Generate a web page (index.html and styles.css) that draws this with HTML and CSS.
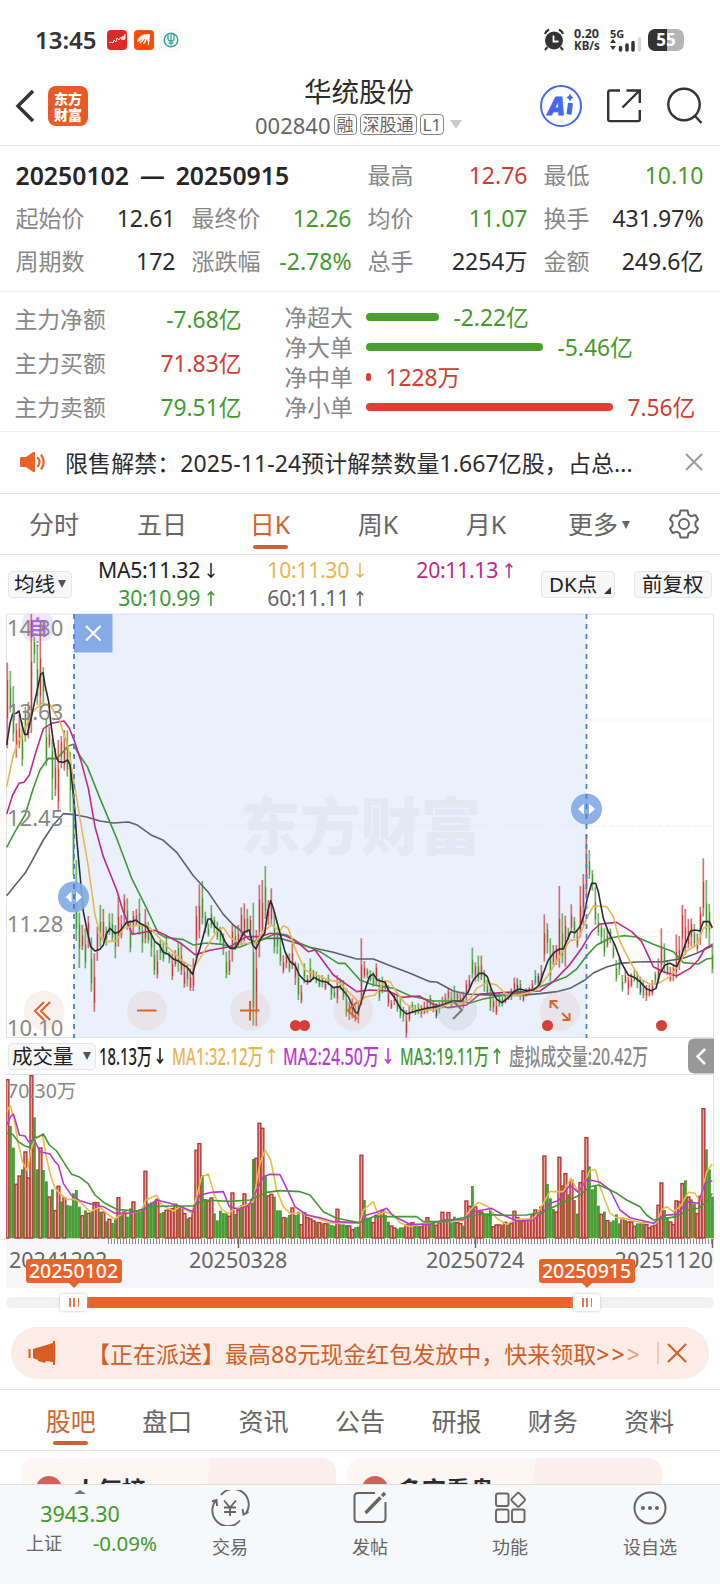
FILE: index.html
```html
<!DOCTYPE html>
<html lang="zh-CN">
<head>
<meta charset="utf-8">
<title>华统股份</title>
<link rel="stylesheet" href="styles.css">
</head>
<body>
<div class="app">
  <div class="status">
    <span class="clock">13:45</span>
    <svg class="apps" width="78" height="22" viewBox="0 0 78 22">
      <rect x="1" y="1" width="20" height="20" rx="4" fill="#e02828"/>
      <path d="M3 14l2-1 2 1 1-3 2 2 1-4 2 2 2-3 1 3 1-4 1 4 1-6v5" fill="none" stroke="#fff" stroke-width=".9"/>
      <rect x="28" y="1" width="20" height="20" rx="4" fill="#ff4a00"/>
      <path d="M31 12q3-8 13-7l-1 11h-1q0-4-1-6-1 3-3 5l-1-.5q2-3 2-5-2 3-5 5l-.7-1q3-2 4-4-3 3-6 3.500z" fill="#fff"/>
      <rect x="55" y="1" width="20" height="20" rx="4" fill="#fff" stroke="#f3f3f3"/>
      <g fill="none" stroke="#3aa59b"><circle cx="65" cy="11" r="6.800" stroke-width="1.500"/><path d="M65 4.500v12M62 5v5q0 2 3 2 3 0 3-2V5M62.500 14h5" stroke-width="1.300"/></g>
    </svg>
    <svg class="alarm" width="22" height="24" viewBox="0 0 22 24">
      <circle cx="11" cy="12.500" r="9" fill="#333"/><path d="M2 6q1-3 4-4.500M20 6q-1-3-4-4.500M4.500 19L2 22M17.500 19l2.500 3" fill="none" stroke="#333" stroke-width="2"/><path d="M10.500 7.500v6h5" fill="none" stroke="#fff" stroke-width="1.800"/>
    </svg>
    <div class="net"><span>0.20</span><span>KB/s</span></div>
    <div class="signal"><span>5G</span>
      <svg width="32" height="15" viewBox="0 0 32 15"><path d="M0 6l3-4 3 4zM0 9l3 4 3-4z" fill="#333"/><path d="M10.500 13v-2.500M17 13V8M23 13V5.500" stroke="#333" stroke-width="3.500" stroke-linecap="round"/><path d="M29.500 13V2" stroke="#d8d8d8" stroke-width="3.500" stroke-linecap="round"/></svg>
    </div>
    <div class="battery"><span>55</span></div>
  </div>

  <header class="head">
    <svg class="back" width="20" height="34" viewBox="0 0 20 34"><path d="M18 2L3 17l15 15" fill="none" stroke="#333" stroke-width="3.500"/></svg>
    <div class="logo">东方<br>财富</div>
    <div class="title">
      <h1>华统股份</h1>
      <div class="code"><span>002840</span><b>融</b><b>深股通</b><b>L1</b><i></i></div>
    </div>
    <svg class="actions" width="164" height="44" viewBox="0 0 164 44">
      <circle cx="22" cy="22" r="20" fill="#fff" stroke="#4468f0" stroke-width="2"/>
      <text x="9" y="30.500" class="ai" textLength="17" lengthAdjust="spacingAndGlyphs">A</text><path d="M31.500 19l-1.500 11.500" stroke="#4468f0" stroke-width="5"/><path d="M31 9.500q.8 3 3.500 4-2.700 1-3.500 4-.8-3-3.500-4 2.700-1 3.500-4z" fill="#4468f0"/>
      <g fill="none" stroke="#333" stroke-width="2.400"><path d="M81 6.500H71q-1.800 0-1.800 1.800v27q0 1.800 1.800 1.800h28q1.800 0 1.800-1.800V26M83.500 23.500l17-17M87.500 6.500h13.300V19"/><circle cx="145" cy="20.500" r="15.700"/><path d="M155.500 31.500l7 7.500"/></g>
    </svg>
  </header>

  <section class="stats">
    <div class="range">20250102 — 20250915</div>
    <p>最高<em class="r">12.76</em></p><p>最低<em class="g">10.10</em></p>
    <p>起始价<em>12.61</em></p><p>最终价<em class="g">12.26</em></p><p>均价<em class="g">11.07</em></p><p>换手<em>431.97%</em></p>
    <p>周期数<em>172</em></p><p>涨跌幅<em class="g">-2.78%</em></p><p>总手<em>2254万</em></p><p>金额<em>249.6亿</em></p>
  </section>

  <section class="flow">
    <div class="main-flow">
      <p>主力净额<em class="g">-7.68亿</em></p><p>主力买额<em class="r">71.83亿</em></p><p>主力卖额<em class="g">79.51亿</em></p>
    </div>
    <div class="net-flow">
      <p>净超大<i class="bar bg" style="width:73px"></i><em class="g">-2.22亿</em></p>
      <p>净大单<i class="bar bg" style="width:177px"></i><em class="g">-5.46亿</em></p>
      <p>净中单<i class="bar br" style="width:5px"></i><em class="r">1228万</em></p>
      <p>净小单<i class="bar br" style="width:247px"></i><em class="r">7.56亿</em></p>
    </div>
  </section>

  <div class="notice">
    <svg width="28" height="22" viewBox="0 0 28 22"><path d="M1 7.500Q1 6 2.500 6H7l6.500-4.500Q16 0 16 2v18q0 2-2.500.5L7 16H2.500Q1 16 1 14.500z" fill="#ea622c"/><path d="M19 7q3 4 0 8M22.500 4.500q4.500 6.500 0 13" fill="none" stroke="#ea622c" stroke-width="2.200" stroke-linecap="round"/></svg>
    <span>限售解禁：2025-11-24预计解禁数量1.667亿股，占总...</span>
    <svg class="x" width="18" height="18" viewBox="0 0 18 18"><path d="M1 1l16 16M17 1L1 17" stroke="#999" stroke-width="1.800"/></svg>
  </div>

  <nav class="periods">
    <span>分时</span><span>五日</span><span class="on">日K</span><span>周K</span><span>月K</span><span class="more">更多<i></i></span>
    <svg width="30" height="30" viewBox="0 0 30 30"><g fill="none" stroke="#666" stroke-width="2" stroke-linejoin="round"><path d="M11.500 1.500h7l1 4.200 2.700 1.600 4.200-1.300 2.600 4.500-2.500 2.700v3.600l2.500 2.700-2.600 4.500-4.200-1.300-2.700 1.600-1 4.200h-7l-1-4.200-2.700-1.600L3.600 24 1 19.500l2.500-2.700v-3.600L1 10.500 3.600 6l4.200 1.300 2.700-1.600z"/><circle cx="15" cy="15" r="5"/></g></svg>
  </nav>

  <div class="ma">
    <span class="pill drop">均线<i></i></span>
    <div class="ma-vals">
      <span class="c5">MA5:11.32<svg><use href="#dn"/></svg></span><span class="c10">10:11.30<svg><use href="#dn"/></svg></span><span class="c20">20:11.13<svg><use href="#up"/></svg></span>
      <span class="c30">30:10.99<svg><use href="#up"/></svg></span><span class="c60">60:11.11<svg><use href="#up"/></svg></span>
    </div>
    <span class="pill dk">DK点<i></i></span><span class="pill fq">前复权</span>
  </div>

  <svg class="kline" width="708" height="426" viewBox="6 613 708 426">
    <defs>
      <symbol id="dn" viewBox="0 0 10 18"><path d="M5 1v15M1.500 12.500L5 16l3.500-3.500" fill="none" stroke="currentColor" stroke-width="1.600"/></symbol>
      <symbol id="up" viewBox="0 0 10 18"><path d="M5 17V2M1.500 5.500L5 2l3.500 3.500" fill="none" stroke="currentColor" stroke-width="1.600"/></symbol>
    </defs>
    <rect x="74" y="614" width="512.500" height="424" fill="#eaf1fc"/>
    <path d="M6.500 614h707v423.500h-707z" fill="none" stroke="#dfe2e8"/>
    <path d="M7 720h706M7 826h706M7 932h706" stroke="#dfe4ec" stroke-opacity=".6" stroke-dasharray="5 2"/>
    <text class="watermark" x="240" y="850" textLength="241" lengthAdjust="spacingAndGlyphs">东方财富</text>
    <rect x="22" y="612" width="31" height="29" rx="9" fill="#f0e6fc"/><text x="28" y="635" class="self">自</text><path d="M37.500 641v6" stroke="#a46af0" stroke-width="1.600" stroke-dasharray="2 1.500"/>
    <g id="candles" transform="translate(0 605) scale(.33333)"></g>
    <g id="averages" class="lines" transform="translate(0 605) scale(.33333)">
      <path stroke="#5e6169" d="M20 872L50 835 75 805 95 770 130 705 160 660 190 626 215 628 260 636 300 648 340 654 385 651 410 659 455 691 490 706 530 742 580 812 625 862 670 928 700 960 720 975 745 1002 765 1012 800 1000 840 1000 880 1012 930 1027 1000 1042 1070 1062 1120 1062 1165 1080 1230 1105 1290 1130 1310 1131 1360 1158 1400 1167 1440 1169 1500 1171 1560 1171 1620 1166 1670 1160 1710 1150 1755 1125 1780 1104 1820 1086 1860 1075 1910 1071 1990 1070 2050 1060 2090 1045 2137 1022"/>
      <path stroke="#3f9a35" d="M20 727L45 680 75 630 100 550 120 495 145 460 170 461 190 440 205 423 220 418 235 445 262 485 300 580 350 700 395 820 440 910 475 985 495 997 550 1004 580 1020 620 1014 665 1018 700 1028 720 1026 760 1010 790 1002 830 985 860 990 900 1015 960 1040 1015 1075 1035 1075 1080 1125 1120 1140 1180 1150 1230 1172 1300 1188 1370 1188 1410 1194 1450 1182 1510 1171 1580 1160 1640 1138 1700 1115 1730 1092 1760 1052 1790 1020 1830 999 1870 992 1910 996 1960 1018 2020 1040 2050 1073 2095 1077 2120 1062 2137 1060"/>
      <path stroke="#c02b87" d="M20 627L38 570 57 535 72 532 88 510 108 440 130 371 155 355 192 348 208 370 224 410 245 475 265 550 285 665 310 755 350 855 370 920 397 988 420 984 465 976 495 990 540 1013 585 1049 630 1036 690 1025 740 995 780 995 812 985 855 992 890 1010 925 1040 945 1035 1000 1110 1070 1160 1110 1155 1165 1158 1205 1177 1258 1173 1300 1198 1345 1208 1400 1200 1440 1167 1520 1162 1575 1160 1620 1158 1660 1130 1710 1078 1745 1030 1775 980 1800 957 1850 952 1895 980 1925 1010 1960 1085 1990 1100 2030 1113 2070 1090 2095 1065 2115 1030 2137 1018"/>
      <path stroke="#e8b653" d="M20 545L40 450 55 410 75 370 100 318 112 307 128 294 150 300 180 350 205 430 225 550 245 670 265 785 285 930 305 1002 325 1010 350 1007 370 970 400 963 430 960 445 963 470 990 505 1028 550 1070 582 1088 600 1060 630 1010 650 980 670 967 690 997 720 1015 765 1015 790 980 815 960 840 978 850 962 865 970 885 1030 915 1095 950 1110 985 1125 1015 1130 1050 1165 1075 1190 1100 1175 1125 1170 1155 1128 1170 1130 1190 1162 1215 1195 1250 1217 1300 1215 1350 1195 1385 1197 1410 1182 1430 1150 1460 1133 1490 1140 1520 1170 1560 1171 1610 1155 1645 1110 1690 1035 1710 1007 1735 1003 1760 940 1780 903 1820 905 1840 935 1860 1010 1890 1070 1920 1120 1950 1138 1975 1135 2010 1115 2035 1080 2060 1038 2090 1020 2110 970 2125 963 2137 970"/>
      <path stroke="#2b2b30" d="M20 420L30 355 38 327 48 325 57 318 66 360 74 388 82 388 92 345 104 290 122 208 129 203 135 240 146 290 152 350 160 410 168 455 176 470 190 472 203 465 210 480 217 540 224 610 230 700 240 810 250 920 262 980 272 1025 285 1038 300 1033 310 1020 320 985 330 970 345 985 358 980 370 965 380 952 395 950 408 945 420 955 440 965 452 985 465 1010 478 1020 490 1042 505 1048 520 1062 535 1068 550 1080 560 1085 578 1108 590 1060 600 1030 612 985 624 942 632 942 645 965 662 980 675 1010 690 1030 705 1030 720 1005 732 982 748 975 758 1020 768 1032 780 1005 794 985 803 920 812 887 820 910 840 985 855 1040 870 1070 885 1080 898 1110 915 1128 930 1130 942 1117 960 1127 982 1132 1000 1148 1020 1145 1045 1175 1065 1220 1073 1225 1090 1170 1108 1115 1120 1107 1132 1125 1155 1132 1165 1155 1185 1180 1202 1212 1220 1227 1250 1217 1280 1210 1310 1205 1340 1195 1360 1188 1385 1188 1405 1160 1420 1125 1438 1105 1450 1105 1462 1115 1475 1155 1490 1183 1506 1193 1525 1178 1545 1157 1560 1152 1580 1157 1600 1155 1618 1140 1630 1105 1645 1065 1662 1043 1678 1032 1690 1032 1702 1005 1712 980 1725 983 1740 965 1752 930 1762 880 1775 835 1787 835 1795 860 1810 940 1825 980 1845 1020 1865 1075 1885 1110 1905 1118 1920 1130 1940 1152 1955 1157 1968 1150 1980 1105 1995 1080 2010 1075 2030 1085 2040 1065 2055 1020 2072 978 2085 975 2100 978 2110 950 2128 950 2137 968"/>
    </g>
    <g class="scale"><text x="7" y="636">14.80</text><text x="7" y="720">13.63</text><text x="7" y="826">12.45</text><text x="7" y="932">11.28</text><text x="7" y="1036">10.10</text></g>
    <g fill="#e2a58c" fill-opacity=".17"><circle cx="44" cy="1010.500" r="20"/><circle cx="147" cy="1010.500" r="20"/><circle cx="250" cy="1010.500" r="20"/><circle cx="353" cy="1010.500" r="20"/><circle cx="457" cy="1010.500" r="20" fill="#a0a5ac"/><circle cx="560" cy="1010.500" r="20"/></g>
    <g fill="none" stroke="#d9652f" stroke-width="2"><path d="M44 1002l-9 9 9 9M50 1002l-9 9 9 9M137 1010.500h19.500M240 1010.500h19.500M250 1001v19.500M357 1002l-9 8.500 9 8.500M550.500 1008v-7h7M551 1001.500l7 7M562 1013l7 7M562.500 1020h7v-7"/><path stroke="#777" d="M453 1001l9 9-9 9"/></g>
    <g fill="#d63f36"><circle cx="295.500" cy="1025.500" r="5.500"/><circle cx="304.500" cy="1025.500" r="5.500"/><circle cx="547.500" cy="1025.500" r="5.500"/><circle cx="661.500" cy="1025.500" r="5.500"/></g>
    <rect x="74" y="614" width="38.500" height="38.500" fill="#86abe8"/><path d="M86 626l14.500 14.500M100.500 626L86 640.500" stroke="#fff" stroke-width="2.200" fill="none"/>
    <g fill="#82a9e6" fill-opacity=".9"><circle cx="73.500" cy="897" r="15.500"/><circle cx="586.500" cy="809" r="15.500"/></g>
    <path d="M74 614v424M586.500 614v424" stroke="#4a7fcd" stroke-width="1.800" stroke-dasharray="5 5"/>
    <path d="M71.500 891.500v11L65.500 897zM76 891.500v11l6-5.500zM584 803.500v11l-6-5.500zM589 803.500v11l6-5.500z" fill="#fff"/>
  </svg>

  <div class="vol-head">
    <span class="pill drop">成交量<i></i></span>
    <svg class="vol-vals" width="620" height="36" viewBox="94 1038 620 36">
      <text x="99" y="1065" textLength="53" lengthAdjust="spacingAndGlyphs" fill="#222">18.13万</text>
      <text x="172" y="1065" textLength="91" lengthAdjust="spacingAndGlyphs" fill="#e8b653">MA1:32.12万</text>
      <text x="283" y="1065" textLength="96" lengthAdjust="spacingAndGlyphs" fill="#bb3bd0">MA2:24.50万</text>
      <text x="400" y="1065" textLength="89" lengthAdjust="spacingAndGlyphs" fill="#3f9a35">MA3:19.11万</text>
      <text x="509" y="1065" textLength="139" lengthAdjust="spacingAndGlyphs" fill="#888">虚拟成交量:20.42万</text>
      <g fill="none" stroke-width="1.600"><path stroke="#222" d="M160 1048v15m-3-4l3 4 3-4"/><path stroke="#e8b653" d="M271.500 1064v-15m-3 4l3-4 3 4"/><path stroke="#bb3bd0" d="M388 1048v15m-3-4l3 4 3-4"/><path stroke="#3f9a35" d="M497 1064v-15m-3 4l3-4 3 4"/></g>
      <path d="M714 1038.500h-19q-7 0-7 7v21q0 7 7 7h19z" fill="#999"/><path d="M705 1049l-7.500 7.500 7.500 7.500" fill="none" stroke="#fff" stroke-width="2.500"/>
    </svg>
  </div>

  <svg class="volume" width="708" height="165" viewBox="6 1074 708 165">
    <path d="M6 1074.500h708M713.500 1074v165" stroke="#dfe2e8" fill="none"/>
    <g id="bars" transform="translate(0 1030) scale(.33333)"></g>
    <g class="lines" transform="translate(0 1030) scale(.33333)">
      <path stroke="#eabd45" d="M20 245L31 227 42 265 55 340 68 398 82 422 92 365 102 330 115 322 128 315 138 375 150 430 165 475 180 490 200 508 225 508 245 520 270 545 300 532 320 550 343 567 370 550 400 548 425 540 437 510 450 505 470 496 485 525 520 543 540 530 575 549 590 500 605 440 625 432 645 500 665 538 685 551 705 535 740 524 760 515 780 400 795 360 812 390 830 480 850 530 870 550 905 550 945 562 990 578 1080 580 1090 540 1120 515 1135 555 1155 545 1180 555 1200 578 1230 590 1270 580 1320 575 1390 572 1410 540 1435 517 1465 530 1490 565 1520 583 1550 567 1600 568 1630 520 1650 485 1690 485 1713 445 1735 488 1755 455 1770 420 1787 420 1800 470 1830 550 1850 563 1880 567 1920 577 1970 578 1985 540 2000 530 2020 545 2040 530 2065 487 2085 490 2100 515 2120 425 2137 402"/>
      <path stroke="#bb3bd0" d="M20 285L32 260 40 252 50 285 58 315 75 318 85 335 103 330 120 365 150 372 165 395 175 405 190 460 215 497 240 512 275 523 310 530 345 550 385 550 430 540 470 510 510 520 550 533 578 545 600 495 635 487 670 485 688 530 715 538 745 528 765 490 790 440 810 433 840 434 860 475 885 530 920 555 960 563 1000 575 1080 578 1100 555 1130 547 1160 535 1180 558 1230 583 1290 583 1330 570 1390 568 1420 545 1475 535 1510 555 1550 573 1600 570 1635 540 1650 520 1675 512 1710 465 1735 487 1760 448 1800 457 1830 480 1860 540 1890 563 1960 580 1990 556 2030 553 2065 515 2095 520 2115 460 2137 453"/>
      <path stroke="#45983a" d="M20 310L38 313 55 335 75 348 88 352 100 325 115 320 130 312 148 345 170 363 190 395 215 433 240 442 265 462 285 495 315 520 350 538 410 543 450 530 520 528 580 528 610 510 690 514 750 510 800 487 840 482 900 485 930 495 970 545 1010 565 1080 578 1120 560 1250 560 1270 575 1340 575 1370 567 1440 553 1520 556 1580 555 1630 545 1680 522 1740 495 1770 470 1795 465 1820 475 1850 490 1880 510 1920 530 1940 555 1960 570 1990 566 2030 560 2065 540 2095 535 2120 515 2137 490"/>
    </g>
    <text x="7" y="1098" class="vmax">70.30万</text>
  </svg>

  <div class="axis">
    <svg width="708" height="9" viewBox="6 1239 708 9"><path d="M108 1241.500h606" stroke="#8c8c90" stroke-width="5" stroke-dasharray="1 2"/><path d="M238.500 1239v9M475.500 1239v9M712.500 1239v9" stroke="#666" stroke-width="1.400"/></svg>
    <span class="d1">20241202</span><span class="d2">20250328</span><span class="d3">20250724</span><span class="d4">20251120</span>
    <b class="flag f1">20250102</b><b class="flag f2">20250915</b>
  </div>
  <div class="slider"><i class="track"></i><i class="fill"></i><i class="knob k1"></i><i class="knob k2"></i></div>

  <div class="promo">
    <svg width="28" height="24" viewBox="0 0 28 24"><path d="M1.500 8v9" stroke="#d95c27" stroke-width="2"/><path d="M5 8L25 2V0h2v24h-2v-3l-7-1-1 2-7-2v-1l-5-2z" fill="#d95c27"/></svg>
    <span>【正在派送】最高88元现金红包发放中，快来领取<q>&gt;&gt;<s>&gt;</s></q></span>
    <svg class="px" width="30" height="22" viewBox="0 0 30 22"><path d="M1 0v22" stroke="#e0a78d"/><path d="M11 2l18 18M29 2L11 20" stroke="#d95c27" stroke-width="2"/></svg>
  </div>

  <nav class="sections"><span class="on">股吧</span><span>盘口</span><span>资讯</span><span>公告</span><span>研报</span><span>财务</span><span>资料</span></nav>

  <div class="cards">
    <div class="card c1"><i>P</i><b>人气榜</b><u>›</u></div>
    <div class="card c2"><i>VS</i><b>多空看盘</b></div>
  </div>

  <footer class="dock">
    <div class="index"><i></i><strong>3943.30</strong><p>上证<em>-0.09%</em></p></div>
    <div><svg width="40" height="36" viewBox="0 0 40 36"><g fill="none" stroke="#666" stroke-width="1.900"><path d="M6 10.500A15.500 15.500 0 0 0 30 30.500M11 5A15.500 15.500 0 0 1 35.500 24M2 11.500L6.500 10l.5 6M38.500 22l-5 2.500-1-5.500M14 10.500l6 7 6-7M14 17.500h12M14 22h12M20 17.500v8.500"/></g></svg>交易</div>
    <div><svg width="40" height="36" viewBox="0 0 40 36"><g fill="none" stroke="#666" stroke-width="2"><path d="M25 3H8Q4.500 3 4.500 6.500v22Q4.500 32 8 32h24q3.500 0 3.500-3.500V12"/><path stroke-width="3.400" d="M15.500 23l15-15.500M32 6l3-3"/></g></svg>发帖</div>
    <div><svg width="40" height="36" viewBox="0 0 40 36"><g fill="none" stroke="#666" stroke-width="1.900"><rect x="6" y="3.500" width="12.500" height="12.500" rx="2"/><rect x="6" y="19.500" width="12.500" height="12.500" rx="2"/><rect x="22" y="19.500" width="12.500" height="12.500" rx="2"/><rect x="23" y="4.500" width="10.500" height="10.500" rx="1.500" transform="rotate(45 28.250 9.750)"/></g></svg>功能</div>
    <div><svg width="40" height="36" viewBox="0 0 40 36"><circle cx="20" cy="18" r="15.500" fill="none" stroke="#666" stroke-width="2"/><g fill="#666"><circle cx="13" cy="18" r="2"/><circle cx="20" cy="18" r="2"/><circle cx="27" cy="18" r="2"/></g></svg>设自选</div>
  </footer>
</div>
<script src="chart.js"></script>
</body>
</html>
```
FILE: styles.css
```css
* { box-sizing: border-box; }
body { margin: 0; background: #fff; font-family: "Noto Sans", "Noto Sans CJK SC", sans-serif; color: #2c2c2e; }
p, h1 { margin: 0; font-weight: 400; }
em, i, s, u { font-style: normal; text-decoration: none; }
svg { display: block; flex: none; }
.app { width: 720px; height: 1584px; overflow: hidden; position: relative; display: flex; flex-direction: column; }
.app > * { flex: none; }
.r { color: #cf3d33 !important; }
.g { color: #459a2f !important; }

.status { height: 65px; padding: 15px 36px 0 35px; display: flex; align-items: center; font-weight: 700; color: #333; }
.clock { font-size: 24px; font-weight: 600; width: 71px; line-height: 30px; }
.apps { margin-right: auto; }
.alarm { margin-right: 9px; }
.net { width: 36px; display: flex; flex-direction: column; font-size: 11.500px; line-height: 12px; white-space: nowrap; }
.net span:first-child { font-size: 12.500px; }
.signal { width: 38px; display: flex; flex-direction: column; font-size: 11px; line-height: 9px; height: 22px; }
.signal svg { margin-top: -1px; }
.battery { width: 36px; height: 22px; border-radius: 7px; background: linear-gradient(90deg, #333 54%, #b5b5b5 54%); color: #fff; font-size: 17px; text-align: center; line-height: 22px; }

.head { height: 81px; border-bottom: 1px solid #e4e4e6; display: flex; align-items: center; padding: 1px 15px 0; }
.logo { width: 40px; height: 40px; margin-left: 13px; border-radius: 8px; background: #ea5a29; color: #fff; font: 900 14px/16px "Noto Sans CJK SC", sans-serif; text-align: center; padding-top: 4px; }
.title { width: 216px; margin-left: 165px; padding-top: 2px; display: flex; flex-direction: column; align-items: flex-start; }
.title h1 { font-size: 27.500px; line-height: 36px; margin-left: 51px; }
.code { display: flex; align-items: center; gap: 3px; font-size: 22px; line-height: 30px; color: #666; white-space: nowrap; margin-left: 2px; }
.code b { font-weight: 400; font-size: 17px; line-height: 19px; border: 1px solid #888; border-radius: 4px; padding: 0 2px; height: 21px; }
.code i { border: 6.500px solid transparent; border-top: 9px solid #ccc; border-bottom: 0; margin-left: 3px; }
.actions { margin-left: auto; margin-right: 2px; }
.ai { font: italic 900 25px "Noto Sans", sans-serif; fill: #4468f0; stroke: #4468f0; stroke-width: .8; }

.stats { height: 146px; padding: 8px 16px 0 15.500px; display: grid; grid-template-columns: repeat(4, 160px); column-gap: 16px; grid-auto-rows: 43px; border-bottom: 1px solid #f0f0f2; font-size: 23px; line-height: 43px; color: #888; }
.stats p, .main-flow p { display: flex; justify-content: space-between; white-space: nowrap; }
.stats em { color: #2c2c2e; }
.range { grid-column: span 2; font-size: 24.800px; font-weight: 600; color: #262628; white-space: nowrap; word-spacing: 4.500px; }

.flow { height: 140px; display: flex; border-bottom: 1px solid #f0f0f2; padding: 6px 0 0 14.500px; font-size: 22.800px; color: #888; }
.main-flow { width: 227px; line-height: 44px; margin-top: -.5px; }
.net-flow { margin-left: 43px; line-height: 30px; padding-top: 5px; }
.net-flow p { display: flex; align-items: center; white-space: nowrap; }
.bar { height: 8px; border-radius: 4px; margin: 0 14px 2px 13.500px; }
.bg { background: #4aa02f; }
.br { background: #df3f35; }

.notice { height: 62px; border-bottom: 1px solid #e4e4e6; display: flex; align-items: center; padding: 0 17px 2px 19px; font-size: 23px; }
.notice span { margin-left: 18px; white-space: nowrap; letter-spacing: .07px; }
.notice .x { margin-left: auto; }

.periods { height: 61px; border-bottom: 1px solid #e4e4e6; display: flex; align-items: center; font-size: 25px; color: #666; }
.periods span { width: 108px; text-align: center; line-height: 60px; position: relative; }
.periods svg { margin-left: 21px; }
.periods .more { padding-left: 10px; }
.more i { display: inline-block; border: 4.500px solid transparent; border-top: 8px solid #666; border-bottom: 0; margin: 0 0 5px 4px; }
.periods .on, .sections .on { color: #d4622f; }
.on::after { content: ""; position: absolute; left: 50%; bottom: 5px; width: 35px; height: 4px; margin-left: -17.500px; border-radius: 2px; background: #cf622f; }

.ma { height: 58px; display: flex; padding-left: 8px; padding-top: 2px; }
.pill { height: 27px; border: 1px solid #e4e6ea; border-radius: 4px; background: #f6f7f9; font-size: 20.500px; line-height: 24px; white-space: nowrap; color: #222; padding: 0 5px; position: relative; }
.ma .pill { margin-top: 13.500px; }
.ma .drop { width: 64px; }
.drop i { display: inline-block; border: 4.500px solid transparent; border-top: 8px solid #555; border-bottom: 0; margin: 0 0 4px 3px; }
.ma-vals { display: grid; grid-template-columns: 144px 149px 149px; grid-auto-rows: 28px; width: 469px; font-size: 21.200px; line-height: 28px; letter-spacing: -.3px; margin-top: -1px; }
.ma-vals span { display: flex; justify-content: flex-end; align-items: center; gap: 6px; }
.ma-vals svg { width: 10px; height: 17px; }
.c5 { color: #222; } .c10 { color: #e8b653; } .c20 { color: #c02b87; } .c30 { color: #3f9a35; } .c60 { color: #666; }
.dk { width: 74px; padding-left: 7px; }
.dk i { position: absolute; right: 3px; bottom: 3px; border-left: 7px solid transparent; border-bottom: 7px solid #333; }
.fq { margin-left: 19px; width: 78px; padding-left: 7px; }

.kline { margin-left: 6px; }
.scale text { font-size: 22px; fill: #888; }
.watermark { font: 900 62px "Noto Sans CJK SC", sans-serif; fill: #e2e9f3; }
.self { font-size: 20px; fill: #a46af0; font-weight: 600; }
.lines path { fill: none; stroke-width: 4.800; stroke-linejoin: round; }
.vol-head { height: 35px; display: flex; padding-left: 8px; }
.vol-head .pill { width: 88px; margin-top: 4px; padding: 0 3px; }
.vol-head .drop i { margin-left: 9px; }
.vol-vals { margin-left: -2px; margin-top: -1px; font-size: 23px; font-weight: 500; }
.volume { margin-left: 6px; }
.vmax { font-size: 19.500px; fill: #888; }

.axis { height: 49px; margin: 0 6px; background: #f7f7f9; position: relative; font-size: 21.500px; line-height: 26px; color: #666; }
.axis span, .flag { position: absolute; top: 8px; }
.d1 { left: 3px; } .d2 { left: 183px; } .d3 { left: 420px; } .d4 { right: 1px; }
.axis .flag { top: 20px; width: 96px; height: 24px; border-radius: 3px; background: #ea622c; color: #fff; font-size: 19.500px; font-weight: 500; line-height: 24px; text-align: center; }
.flag::after { content: ""; position: absolute; left: 43px; top: 24px; border: 5px solid transparent; border-top-color: #ea622c; border-bottom: 0; }
.f1 { left: 19.500px; } .f2 { left: 532.500px; }

.slider { height: 29px; margin: 0 6px; position: relative; }
.slider i { position: absolute; }
.track { left: 0; right: 0; top: 9px; height: 11px; border-radius: 6px; background: #f1f1f3; }
.fill { left: 80px; width: 494px; top: 9px; height: 11px; background: #ea622c; }
.knob { top: 6px; width: 27px; height: 17px; border-radius: 3px; background: linear-gradient(90deg, #e27a4d 1.500px, transparent 1.500px, transparent 4.500px, #e27a4d 4.500px, #e27a4d 6px, transparent 6px, transparent 8.500px, #e27a4d 8.500px) 9px 4px / 10px 9px no-repeat #fff; box-shadow: 0 0 3px #bbb; }
.k1 { left: 54px; } .k2 { left: 567px; }

.promo { margin: 10px 11px; height: 52px; border-radius: 26px; background: #fbede5; display: flex; align-items: center; padding-left: 17px; padding-right: 22px; font-size: 23px; color: #cf602d; }
.promo span { margin-left: 31px; white-space: nowrap; }
.promo q { quotes: none; letter-spacing: 2px; font-weight: 500; }
.promo s { opacity: .5; }
.px { margin-left: auto; }

.sections { height: 62px; border-top: 1px solid #e4e4e6; border-bottom: 1px solid #e4e4e6; display: flex; padding: 0 22.500px; font-size: 25px; color: #666; line-height: 62px; }
.sections span { flex: 1; text-align: center; position: relative; height: 60px; }
.cards { height: 33px; overflow: hidden; padding: 7px 22px 0 21px; display: flex; gap: 11px; }
.card { width: 315px; height: 90px; border-radius: 14px; display: flex; padding: 15px 15px; line-height: 34px; font-size: 24px; background: linear-gradient(97deg, #fdf6f3 58%, #fceeec 58%); }
.card i { width: 26px; height: 26px; margin-top: 3px; border-radius: 50%; background: #d3615a; color: #fff; font-size: 15px; line-height: 26px; text-align: center; font-weight: 700; }
.card b { margin-left: 12px; font-weight: 700; }
.card u { margin-left: 8px; color: #aaa; }
.c2 b { margin-left: 10px; }

.dock { height: 100px; background: #f7f8fa; border-top: 1px solid #e0e1e4; display: grid; grid-template-columns: 160px repeat(4, 140px); color: #666; font-size: 18px; }
.dock > div { display: flex; flex-direction: column; align-items: center; line-height: 28px; }
.dock div > svg { margin-top: 5px; margin-bottom: 7px; }
.dock .index { position: relative; font-size: 19px; line-height: 30px; }
.index > i { border: 6px solid transparent; border-bottom: 4px solid #777; border-top: 0; margin-top: 5px; }
.index strong { font-weight: 400; font-size: 21.500px; color: #459a2f; line-height: 30px; margin-top: 5px; }
.index p { color: #666; font-size: 18px; padding-left: 26px; line-height: 28px; display: flex; justify-content: space-between; width: 100%; padding-right: 3px; }
.index em { color: #459a2f; font-size: 20.500px; }
```
FILE: chart.js
```js
// Chart units are thirds of a pixel; one trading day is 9 units wide.
const FIRST = 22, STEP = 9, BASE = 625;
const COLORS = { r: '#c5342f', g: '#349422', d: '#3b4150', b: '#8a7a35' };

// colour, high, low
const candles = `r173-430 g198-322 g243-410 r355-458 r330-430 g350-484 g305-410 r290-400 r27-384 g95-175 g120-300 r60-310 g186-300 g340-483 r365-428 g400-585 r430-573 r405-620 r393-490 r375-497 g376-515 g440-620 g520-810 g765-1008 g923-1089 r960-1035 g970-1090 r933-1030 g997-1160 r1045-1220 r965-1068 g900-1025 r912-1010 g965-1022 g925-990 g925-1010 g960-1060 r875-1025 r930-1000 r868-960 g880-975 g945-1042 r918-990 r912-960 g880-990 g960-1043 r912-1015 g950-1015 g975-1055 g1010-1110 r1035-1120 g1005-1065 g1010-1070 g990-1050 g1040-1075 r1045-1125 r1035-1085 g1010-1100 r1015-1110 r1070-1148 g1080-1145 r1090-1158 r1060-1158 r903-1060 r838-1000 g828-958 g920-985 g955-995 g900-970 g935-985 g950-1005 g965-1015 g985-1050 g1040-1120 r1035-1110 r958-1070 g965-1035 r960-1030
r907-1020 r895-1010 g912-985 r932-1000 g893-1262 r975-1263 r840-1057 r825-1000 g783-942 r885-960 r850-958 g920-1045 g980-1047 g990-1082 r1050-1105 r1045-1090 g1045-1102 r1015-1092 r1070-1140 g1075-1185 r1140-1195 g1075-1135 r1110-1140 g1060-1130 r1095-1125 g1100-1135 g1110-1147 g1110-1147 r1125-1155 g1108-1140 g1140-1185 g1150-1180 r1110-1195 g1120-1155 g1125-1185 g1150-1235 r1190-1245 r1180-1240 g1200-1250 r1190-1255 r1000-1200 r1068-1120 g1090-1120 g1095-1130 g1100-1145 r1075-1140 g1120-1188 g1115-1165 r1125-1160 r1140-1205 r1185-1212 r1165-1200 g1165-1220 g1180-1240 g1205-1250 r1215-1298 r1200-1250 g1190-1225 g1200-1230 g1195-1228 r1200-1238 r1190-1228 r1185-1225 g1170-1215 r1185-1222 d1195-1240 g1190-1225 r1175-1210 r1165-1200 r1150-1195 g1160-1210 g1142-1190 r1160-1195 r1165-1195 r1160-1210 r1125-1195 r1110-1150 g1028-1120 r1072-1130 g1052-1130
r1052-1125 g1095-1160 g1125-1170 g1150-1218 r1180-1222 r1185-1230 g1165-1205 g1175-1205 r1170-1195 g1160-1185 r1150-1185 r1118-1160 d1120-1170 g1125-1185 r1160-1190 r1150-1175 r1145-1170 r1125-1160 g1095-1140 d1105-1150 r1080-1130 r928-1070 g955-1045 g1000-1130 r1020-1080 r1020-1080 r843-1088 g925-1075 r932-1085 g968-1005 r898-980 g936-1000 r975-1028 r843-997 r807-960 r690-870 g735-822 g795-857 g845-960 g925-992 g955-1018 g970-1055 r970-1028 g970-1015 g1010-1060 g1065-1130 g1060-1110 g1110-1160 r1095-1135 r1115-1170 r1105-1147 g1095-1130 g1100-1150 d1115-1170 g1125-1180 r1140-1188 r1140-1175 r1125-1172 g1100-1140 r1060-1135 r970-1100 g1015-1105 g1065-1110 r1085-1130 r1080-1128 r988-1120 r993-1095 r900-1055 r912-1050 r942-1030 r940-1025 g957-1025 r985-1040 r905-1020 r760-935 g825-1000 g897-1020 g1015-1105`.split(/\s+/);

// colour, top edge of the bar
const volumes = `r148 g288 g353 r462 r437 g418 r365 r443 r136 g262 g418 r353 g420 g454 r500 g478 r541 r468 g514 r503 g525 g527 g490 g480 g530 r556 g541 r549 g545 r517 r517 g545 r546 g574 r567 g579 g568 r502 g550 r545 g560 g535 r515 g540 g545 g540 r423 g520 g517 g515 r507 g549 g546 r540 r540 r535 r522 b530 r530 r550 g565 r563 r545 r360 r340 g436 g507 r512 r503 g550 g571 g542 g549 g550 r558 r488 g552 r540 g525 r491 r525 r520 g387 r384 r279 r294 g437 r497 r492 g500 g541 g541 r562 g562 g555 r533 g555 g545 r583 r548 r562 r566 r572 b575 r577 b580 r580 g580 g585 g587 r537 g583 g583 g585 r587 r598 g592 g590
r375 g510 g563 g563 r577 r555 r550 r540 g555 g575 r587 r593 g596 g592 g592 r583 r580 r577 g587 g588 r590 r580 r562 g575 g577 r585 r577 r546 r570 r547 g577 g560 r577 r580 g587 r512 r528 g468 r530 r545 r545 g550 g550 g537 r589 r584 r584 b584 r576 g583 r580 r543 r562 b567 r573 r570 r567 r553 r539 r553 r530 r377 g462 g505 g537 r545 r381 b465 r430 b493 r450 b510 g551 r457 r422 r322 g409 g478 g467 g527 r552 g545 r571 g575 g571 g553 g580 r564 b570 r575 r575 r588 g580 b580 g580 r583 r593 r588 r585 r525 r458 g540 g563 r575 r583 r512 r515 r460 g451 r500 b508 b520 r550 r498 r235 g358 g418 g500`.split(/\s+/);

const rect = (x, y, w, h, attrs) => `<rect x="${x}" y="${y}" width="${w}" height="${h}" ${attrs}/>`;

document.getElementById('candles').innerHTML = candles.map((c, i) => {
  const [hi, lo] = c.slice(1).split('-').map(Number);
  const x = FIRST + STEP * i, len = lo - hi, fill = COLORS[c[0]];
  const start = hi + len * (i % 3 === 0 ? 0.2 : 0.4);
  return rect(x - 2.5, hi, 5, len, `fill="${fill}" fill-opacity=".68"`) +
    rect(x - 0.5, start, 3, len * 0.45, `fill="${fill}"`);
}).join('');

document.getElementById('bars').innerHTML = volumes.map((v, i) => {
  const x = FIRST + STEP * i, top = +v.slice(1);
  if (v[0] === 'r') return rect(x - 4, top + 1, 8.5, BASE - top - 2, 'fill="#e9a39d" stroke="#b53c37" stroke-width="4.4"');
  return rect(x - 4, top, 8.5, BASE - top, `fill="${v[0] === 'b' ? COLORS.b : '#479e34'}"`);
}).join('');
```
